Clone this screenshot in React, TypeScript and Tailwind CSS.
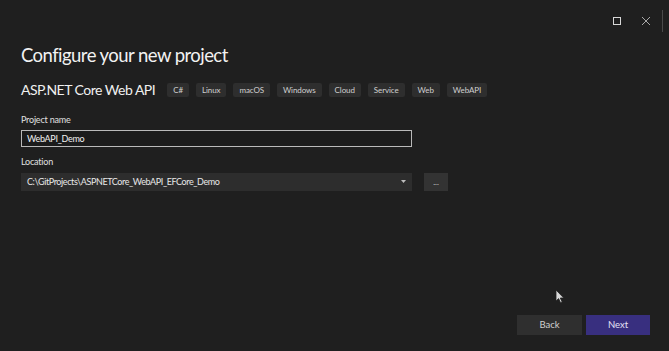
import React from "react";

const tags = ["C#", "Linux", "macOS", "Windows", "Cloud", "Service", "Web", "WebAPI"];

const App = () => {
  return (
    <div
      className="relative w-[669px] h-[351px] overflow-hidden bg-[#1f1f1f] text-[#e6e6e6] flex flex-col"
      style={{ fontFamily: '"Lato", "Open Sans", sans-serif' }}
    >
      {/* window controls */}
      <div className="h-[42px] flex justify-end items-start pt-[10px] pr-[6px]">
        <div className="flex items-center h-[22px]">
          <button className="w-[26px] h-[22px] flex items-center justify-center">
            <span className="block w-[8px] h-[8px] border border-[#d8d8d8]" />
          </button>
          <button className="w-[32px] h-[22px] flex items-center justify-center">
            <svg width="10" height="10" viewBox="0 0 10 10">
              <path d="M1 1 L9 9 M9 1 L1 9" stroke="#a8a8a8" strokeWidth="1" />
            </svg>
          </button>
          <span className="w-[1px] h-[22px] bg-[#4a4a4a]" />
        </div>
      </div>

      {/* content */}
      <div className="flex-1 flex flex-col px-[21px]">
        <h1 className="text-[18.5px] leading-[26px] tracking-[-0.55px] text-[#f2f2f2]">Configure your new project</h1>

        <div className="mt-[13px] flex items-center">
          <span className="text-[14px] leading-[18px] tracking-[-0.5px] text-[#f0f0f0]">ASP.NET Core Web API</span>
          <div className="ml-[12px] flex gap-[7px]">
            {tags.map((t) => (
              <span
                key={t}
                className="h-[14px] px-[6px] flex items-center rounded-[2px] bg-[#2e2e2e] text-[8px] tracking-[-0.1px] text-[#d0d0d0]"
              >
                {t}
              </span>
            ))}
          </div>
        </div>

        <label className="mt-[15px] text-[9px] leading-[12px] tracking-[-0.2px] text-[#e0e0e0]">Project name</label>
        <div className="mt-[4px] w-[391px] h-[17px] border border-[#b9b9b9] bg-[#1b1b1b] flex items-center px-[5px]">
          <span className="text-[9px] tracking-[-0.3px] text-[#f0f0f0]">WebAPI_Demo</span>
        </div>

        <label className="mt-[9px] text-[9px] leading-[12px] tracking-[-0.2px] text-[#e0e0e0]">Location</label>
        <div className="mt-[5px] flex items-center">
          <div className="w-[391px] h-[18px] bg-[#2d2d2d] flex items-center justify-between px-[6px]">
            <span className="text-[9px] tracking-[-0.4px] text-[#e8e8e8]">C:\GitProjects\ASPNETCore_WebAPI_EFCore_Demo</span>
            <svg width="5" height="4" viewBox="0 0 5 4">
              <path d="M0 0 L5 0 L2.5 3 Z" fill="#bdbdbd" />
            </svg>
          </div>
          <button className="ml-[12px] w-[24px] h-[18px] bg-[#333333] text-[8px] text-[#cfcfcf] leading-none">
            ...
          </button>
        </div>

        <div className="flex-1" />

        <div className="flex justify-end gap-[4px] mb-[16px] mr-[-2px]">
          <button className="w-[65px] h-[20px] bg-[#2f2f2f] text-[9.5px] text-[#d0d0d0]">Back</button>
          <button className="w-[64px] h-[20px] bg-[#382f7f] text-[9.5px] text-[#e4e2f5]">Next</button>
        </div>
      </div>

      {/* mouse pointer */}
      <svg className="absolute left-[555px] top-[289px]" width="10" height="15" viewBox="0 0 10 15">
        <path d="M1 1 L1 12 L3.6 9.6 L5.6 13.8 L7.2 13 L5.3 9 L8.8 9 Z" fill="#d9d9d9" stroke="#222" strokeWidth="0.8" />
      </svg>
    </div>
  );
};

export default App;
